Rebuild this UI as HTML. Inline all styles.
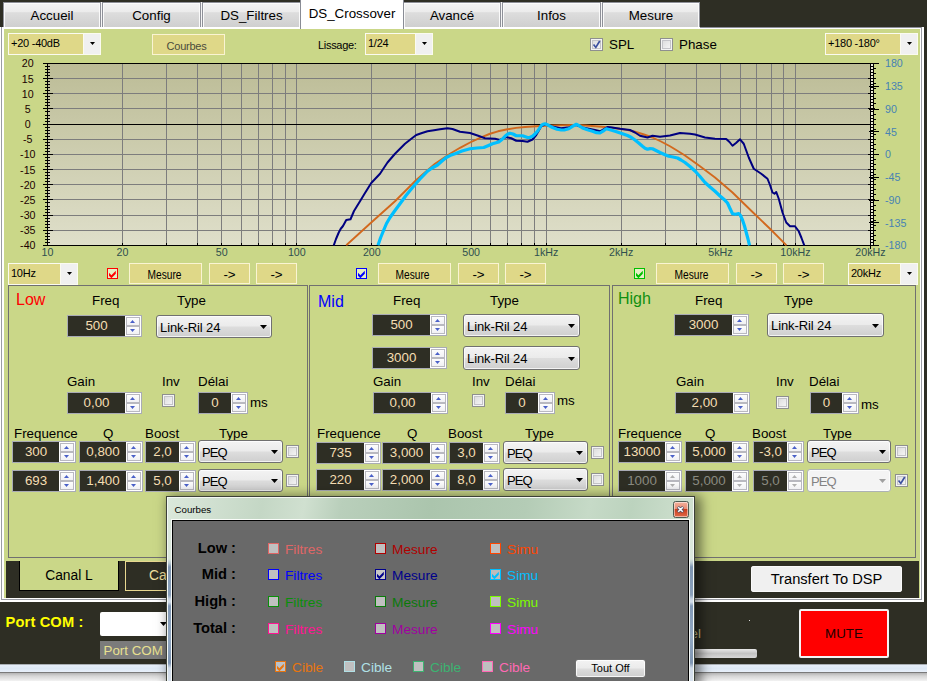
<!DOCTYPE html>
<html lang="fr"><head><meta charset="utf-8"><title>DS Crossover</title>
<style>
html,body{margin:0;padding:0;}
body{width:927px;height:681px;overflow:hidden;background:#2e2e24;position:relative;font-family:"Liberation Sans",sans-serif;}
#root{position:absolute;left:0;top:0;width:927px;height:681px;overflow:hidden;}
#root div,#root svg{position:absolute;}
.t{white-space:nowrap;}
#win{overflow:visible;box-shadow:4px 2px 11px 2px rgba(0,0,0,.5);}
</style></head><body><div id="root">
<div style="left:3px;top:2px;width:697px;height:26px;background:#f6f6f6;"></div>
<div style="left:3px;top:2px;width:98px;height:26px;background:linear-gradient(#f3f3f3 0%,#ebebeb 38%,#dddddd 40%,#cfcfcf 100%);border:1px solid #8e9098;box-sizing:border-box;box-shadow:inset 0 1px 0 #fcfcfc,inset 1px 0 0 #fafafa,inset -1px 0 0 #fafafa;"></div>
<div class="t" style="left:3px;top:9px;font-size:13.33px;line-height:13.33px;color:#000;width:98px;text-align:center;">Accueil</div>
<div style="left:102px;top:2px;width:99px;height:26px;background:linear-gradient(#f3f3f3 0%,#ebebeb 38%,#dddddd 40%,#cfcfcf 100%);border:1px solid #8e9098;box-sizing:border-box;box-shadow:inset 0 1px 0 #fcfcfc,inset 1px 0 0 #fafafa,inset -1px 0 0 #fafafa;"></div>
<div class="t" style="left:102px;top:9px;font-size:13.33px;line-height:13.33px;color:#000;width:99px;text-align:center;">Config</div>
<div style="left:202px;top:2px;width:99px;height:26px;background:linear-gradient(#f3f3f3 0%,#ebebeb 38%,#dddddd 40%,#cfcfcf 100%);border:1px solid #8e9098;box-sizing:border-box;box-shadow:inset 0 1px 0 #fcfcfc,inset 1px 0 0 #fafafa,inset -1px 0 0 #fafafa;"></div>
<div class="t" style="left:202px;top:9px;font-size:13.33px;line-height:13.33px;color:#000;width:99px;text-align:center;">DS_Filtres</div>
<div style="left:403px;top:2px;width:98px;height:26px;background:linear-gradient(#f3f3f3 0%,#ebebeb 38%,#dddddd 40%,#cfcfcf 100%);border:1px solid #8e9098;box-sizing:border-box;box-shadow:inset 0 1px 0 #fcfcfc,inset 1px 0 0 #fafafa,inset -1px 0 0 #fafafa;"></div>
<div class="t" style="left:403px;top:9px;font-size:13.33px;line-height:13.33px;color:#000;width:98px;text-align:center;">Avancé</div>
<div style="left:502px;top:2px;width:99px;height:26px;background:linear-gradient(#f3f3f3 0%,#ebebeb 38%,#dddddd 40%,#cfcfcf 100%);border:1px solid #8e9098;box-sizing:border-box;box-shadow:inset 0 1px 0 #fcfcfc,inset 1px 0 0 #fafafa,inset -1px 0 0 #fafafa;"></div>
<div class="t" style="left:502px;top:9px;font-size:13.33px;line-height:13.33px;color:#000;width:99px;text-align:center;">Infos</div>
<div style="left:602px;top:2px;width:98px;height:26px;background:linear-gradient(#f3f3f3 0%,#ebebeb 38%,#dddddd 40%,#cfcfcf 100%);border:1px solid #8e9098;box-sizing:border-box;box-shadow:inset 0 1px 0 #fcfcfc,inset 1px 0 0 #fafafa,inset -1px 0 0 #fafafa;"></div>
<div class="t" style="left:602px;top:9px;font-size:13.33px;line-height:13.33px;color:#000;width:98px;text-align:center;">Mesure</div>
<div style="left:300px;top:0px;width:104px;height:29px;background:#fff;border:1px solid #898c95;border-bottom:none;border-top:none;box-sizing:border-box;z-index:2;"></div>
<div class="t" style="left:300px;top:7px;font-size:13.33px;line-height:13.33px;color:#000;width:104px;text-align:center;z-index:3;">DS_Crossover</div>
<div style="left:0px;top:27px;width:924px;height:575px;background:#fff;"></div>
<div style="left:700px;top:27px;width:222px;height:1px;background:#8c8e98;"></div>
<div style="left:1px;top:27px;width:1px;height:573px;background:#9a9ca4;"></div>
<div style="left:921px;top:27px;width:1px;height:573px;background:#9a9ca4;"></div>
<div style="left:1px;top:599px;width:921px;height:1px;background:#9a9ca4;"></div>
<div style="left:4px;top:29px;width:916px;height:569px;background:#cad788;"></div>
<div style="left:6px;top:561px;width:913px;height:37px;background:#2e2e24;"></div>
<div style="left:8px;top:33px;width:93px;height:22px;background:#dfd888;border:1px solid #fbfbf0;box-sizing:border-box;"></div>
<div style="left:83px;top:34px;width:17px;height:20px;background:#f0f0f0;border-left:1px solid #fbfbf0;box-sizing:border-box;"></div>
<svg style="left:90px;top:42px" width="6" height="4" viewBox="0 0 6 4"><path d="M0 0H5L2.5 3Z" fill="#000"/></svg>
<div class="t" style="left:11px;top:38px;font-size:11px;line-height:11px;color:#000;letter-spacing:-0.25px;">+20 -40dB</div>
<div style="left:365px;top:33px;width:68px;height:22px;background:#dfd888;border:1px solid #fbfbf0;box-sizing:border-box;"></div>
<div style="left:415px;top:34px;width:17px;height:20px;background:#f0f0f0;border-left:1px solid #fbfbf0;box-sizing:border-box;"></div>
<svg style="left:422px;top:42px" width="6" height="4" viewBox="0 0 6 4"><path d="M0 0H5L2.5 3Z" fill="#000"/></svg>
<div class="t" style="left:368px;top:38px;font-size:11px;line-height:11px;color:#000;letter-spacing:-0.25px;">1/24</div>
<div style="left:825px;top:33px;width:93px;height:22px;background:#dfd888;border:1px solid #fbfbf0;box-sizing:border-box;"></div>
<div style="left:900px;top:34px;width:17px;height:20px;background:#f0f0f0;border-left:1px solid #fbfbf0;box-sizing:border-box;"></div>
<svg style="left:907px;top:42px" width="6" height="4" viewBox="0 0 6 4"><path d="M0 0H5L2.5 3Z" fill="#000"/></svg>
<div class="t" style="left:828px;top:38px;font-size:11px;line-height:11px;color:#000;letter-spacing:-0.25px;">+180 -180°</div>
<div style="left:8px;top:263px;width:70px;height:22px;background:#dfd888;border:1px solid #fbfbf0;box-sizing:border-box;"></div>
<div style="left:60px;top:264px;width:17px;height:20px;background:#f0f0f0;border-left:1px solid #fbfbf0;box-sizing:border-box;"></div>
<svg style="left:67px;top:272px" width="6" height="4" viewBox="0 0 6 4"><path d="M0 0H5L2.5 3Z" fill="#000"/></svg>
<div class="t" style="left:11px;top:268px;font-size:11px;line-height:11px;color:#000;letter-spacing:-0.25px;">10Hz</div>
<div style="left:848px;top:263px;width:70px;height:22px;background:#dfd888;border:1px solid #fbfbf0;box-sizing:border-box;"></div>
<div style="left:900px;top:264px;width:17px;height:20px;background:#f0f0f0;border-left:1px solid #fbfbf0;box-sizing:border-box;"></div>
<svg style="left:907px;top:272px" width="6" height="4" viewBox="0 0 6 4"><path d="M0 0H5L2.5 3Z" fill="#000"/></svg>
<div class="t" style="left:851px;top:268px;font-size:11px;line-height:11px;color:#000;letter-spacing:-0.25px;">20kHz</div>
<div style="left:152px;top:34px;width:73px;height:21px;background:#dfd888;border:1px solid #faf4d2;box-sizing:border-box;"></div>
<div class="t" style="left:150px;top:41px;font-size:11px;line-height:11px;color:#4c4c3c;width:73px;text-align:center;letter-spacing:-0.25px;">Courbes</div>
<div class="t" style="left:318px;top:40px;font-size:11px;line-height:11px;color:#000;letter-spacing:-0.3px;">Lissage:</div>
<div style="left:590px;top:38px;width:13px;height:13px;background:linear-gradient(135deg,#d8d8d8,#fafafa);border:1px solid #8e8f8f;box-sizing:border-box;box-shadow:inset 0 0 0 1px #f4f4f4, inset 0 0 0 2px #c4c4c8;"></div>
<svg style="left:592px;top:40px" width="9" height="9" viewBox="0 0 9 9"><path d="M0.9 4.9L2.2 3.9L3.7 6.1L7 0.6L8.5 1.5L3.9 8.7Z" fill="#3c509f"/></svg>
<div class="t" style="left:609px;top:38px;font-size:13.33px;line-height:13.33px;color:#000;">SPL</div>
<div style="left:660px;top:38px;width:13px;height:13px;background:linear-gradient(135deg,#d8d8d8,#fafafa);border:1px solid #8e8f8f;box-sizing:border-box;box-shadow:inset 0 0 0 1px #f4f4f4, inset 0 0 0 2px #c4c4c8;"></div>
<div class="t" style="left:679px;top:38px;font-size:13.33px;line-height:13.33px;color:#000;">Phase</div>
<svg id="chart" style="left:0;top:55px" width="927" height="207" viewBox="0 55 927 207">
<defs><linearGradient id="pg" x1="0" y1="0" x2="0" y2="1"><stop offset="0" stop-color="#bcbc96"/><stop offset="1" stop-color="#dfdfca"/></linearGradient></defs>
<rect x="47.5" y="63.5" width="822.9" height="182.0" fill="url(#pg)"/>
<rect x="870.9" y="63.5" width="2" height="182.0" fill="#eeeedd"/>
<path d="M122.5 63.5V245.4M166.5 63.5V245.4M197.5 63.5V245.4M221.5 63.5V245.4M241.5 63.5V245.4M258.5 63.5V245.4M272.5 63.5V245.4M285.5 63.5V245.4M296.5 63.5V245.4M371.5 63.5V245.4M415.5 63.5V245.4M446.5 63.5V245.4M471.5 63.5V245.4M490.5 63.5V245.4M507.5 63.5V245.4M521.5 63.5V245.4M534.5 63.5V245.4M546.5 63.5V245.4M621.5 63.5V245.4M665.5 63.5V245.4M696.5 63.5V245.4M720.5 63.5V245.4M740.5 63.5V245.4M756.5 63.5V245.4M771.5 63.5V245.4M783.5 63.5V245.4M795.5 63.5V245.4M47.5 78.5H870.4M47.5 93.5H870.4M47.5 108.5H870.4M47.5 139.5H870.4M47.5 154.5H870.4M47.5 169.5H870.4M47.5 184.5H870.4M47.5 199.5H870.4M47.5 215.5H870.4M47.5 230.5H870.4" stroke="#7d7d7d" stroke-width="1" fill="none" shape-rendering="crispEdges"/>
<path d="M42.5 63.5H878.5M42.5 245.5H878.5M47.5 63.5V245.5M870.5 63.5V248.5M873.5 63.5V245.5M42.5 124.5H870.5M42.5 63.5H52.5M44.5 66.5H49.5M44.5 69.5H49.5M44.5 72.5H49.5M44.5 75.5H49.5M42.5 78.5H52.5M44.5 81.5H49.5M44.5 84.5H49.5M44.5 87.5H49.5M44.5 90.5H49.5M42.5 93.5H52.5M44.5 96.5H49.5M44.5 99.5H49.5M44.5 102.5H49.5M44.5 105.5H49.5M42.5 108.5H52.5M44.5 111.5H49.5M44.5 115.5H49.5M44.5 118.5H49.5M44.5 121.5H49.5M42.5 124.5H52.5M44.5 127.5H49.5M44.5 130.5H49.5M44.5 133.5H49.5M44.5 136.5H49.5M42.5 139.5H52.5M44.5 142.5H49.5M44.5 145.5H49.5M44.5 148.5H49.5M44.5 151.5H49.5M42.5 154.5H52.5M44.5 157.5H49.5M44.5 160.5H49.5M44.5 163.5H49.5M44.5 166.5H49.5M42.5 169.5H52.5M44.5 172.5H49.5M44.5 175.5H49.5M44.5 178.5H49.5M44.5 181.5H49.5M42.5 184.5H52.5M44.5 187.5H49.5M44.5 190.5H49.5M44.5 193.5H49.5M44.5 196.5H49.5M42.5 199.5H52.5M44.5 202.5H49.5M44.5 206.5H49.5M44.5 209.5H49.5M44.5 212.5H49.5M42.5 215.5H52.5M44.5 218.5H49.5M44.5 221.5H49.5M44.5 224.5H49.5M44.5 227.5H49.5M42.5 230.5H52.5M44.5 233.5H49.5M44.5 236.5H49.5M44.5 239.5H49.5M44.5 242.5H49.5M42.5 245.5H52.5M867.5 63.5H874.5M870.5 66.5H873.5M870.5 69.5H873.5M870.5 72.5H873.5M870.5 75.5H873.5M867.5 78.5H874.5M870.5 81.5H873.5M870.5 84.5H873.5M870.5 87.5H873.5M870.5 90.5H873.5M867.5 93.5H874.5M870.5 96.5H873.5M870.5 99.5H873.5M870.5 102.5H873.5M870.5 105.5H873.5M867.5 108.5H874.5M870.5 111.5H873.5M870.5 115.5H873.5M870.5 118.5H873.5M870.5 121.5H873.5M867.5 124.5H874.5M870.5 127.5H873.5M870.5 130.5H873.5M870.5 133.5H873.5M870.5 136.5H873.5M867.5 139.5H874.5M870.5 142.5H873.5M870.5 145.5H873.5M870.5 148.5H873.5M870.5 151.5H873.5M867.5 154.5H874.5M870.5 157.5H873.5M870.5 160.5H873.5M870.5 163.5H873.5M870.5 166.5H873.5M867.5 169.5H874.5M870.5 172.5H873.5M870.5 175.5H873.5M870.5 178.5H873.5M870.5 181.5H873.5M867.5 184.5H874.5M870.5 187.5H873.5M870.5 190.5H873.5M870.5 193.5H873.5M870.5 196.5H873.5M867.5 199.5H874.5M870.5 202.5H873.5M870.5 206.5H873.5M870.5 209.5H873.5M870.5 212.5H873.5M867.5 215.5H874.5M870.5 218.5H873.5M870.5 221.5H873.5M870.5 224.5H873.5M870.5 227.5H873.5M867.5 230.5H874.5M870.5 233.5H873.5M870.5 236.5H873.5M870.5 239.5H873.5M870.5 242.5H873.5M867.5 245.5H874.5M868.5 63.5H878.5M873.5 68.5H875.5M873.5 73.5H875.5M873.5 78.5H875.5M873.5 83.5H875.5M868.5 86.5H878.5M873.5 88.5H875.5M873.5 93.5H875.5M873.5 98.5H875.5M873.5 103.5H875.5M868.5 109.5H878.5M873.5 114.5H875.5M873.5 119.5H875.5M873.5 124.5H875.5M873.5 129.5H875.5M868.5 131.5H878.5M873.5 134.5H875.5M873.5 139.5H875.5M873.5 144.5H875.5M873.5 149.5H875.5M868.5 154.5H878.5M873.5 159.5H875.5M873.5 164.5H875.5M873.5 169.5H875.5M873.5 174.5H875.5M868.5 177.5H878.5M873.5 179.5H875.5M873.5 184.5H875.5M873.5 189.5H875.5M873.5 194.5H875.5M868.5 200.5H878.5M873.5 205.5H875.5M873.5 210.5H875.5M873.5 215.5H875.5M873.5 220.5H875.5M868.5 222.5H878.5M873.5 225.5H875.5M873.5 230.5H875.5M873.5 235.5H875.5M873.5 240.5H875.5M868.5 245.5H878.5M122.5 242.5V245.5M166.5 242.5V245.5M197.5 242.5V245.5M221.5 242.5V245.5M241.5 242.5V245.5M258.5 242.5V245.5M272.5 242.5V245.5M285.5 242.5V245.5M296.5 242.5V245.5M371.5 242.5V245.5M415.5 242.5V245.5M446.5 242.5V245.5M471.5 242.5V245.5M490.5 242.5V245.5M507.5 242.5V245.5M521.5 242.5V245.5M534.5 242.5V245.5M546.5 242.5V245.5M621.5 242.5V245.5M665.5 242.5V245.5M696.5 242.5V245.5M720.5 242.5V245.5M740.5 242.5V245.5M756.5 242.5V245.5M771.5 242.5V245.5M783.5 242.5V245.5M795.5 242.5V245.5M47.5 242.5V245.5" stroke="#000" stroke-width="1" fill="none" shape-rendering="crispEdges"/>
<clipPath id="cp"><rect x="47.5" y="63.5" width="822.9" height="182.5"/></clipPath>
<g clip-path="url(#cp)" fill="none" stroke-linejoin="round">
<polyline points="346.25,245.30 371.25,222.50 395.00,201.25 416.25,180.00 435.00,163.75 450.00,153.75 460.00,147.80 470.00,142.50 480.00,137.80 490.00,133.75 498.00,131.30 507.50,129.25 516.00,127.90 525.00,127.00 540.00,126.00 552.50,125.50 565.00,125.10 576.25,125.00 586.00,125.50 595.00,126.25 608.00,127.30 620.00,128.75 628.00,130.10 635.00,131.75 644.00,134.50 652.50,137.50 661.00,141.50 670.00,146.25 677.00,150.50 685.00,155.50 700.00,166.25 715.00,177.50 732.50,192.50 751.75,211.25 770.00,228.75 786.50,245.30" stroke="#d2691e" stroke-width="1.9"/>
<polyline points="333.75,245.30 336.00,239.00 338.75,232.50 340.75,228.75 343.00,226.00 346.25,220.00 350.50,219.25 354.00,211.00 360.00,201.25 365.00,193.00 371.25,183.00 380.00,173.75 387.50,162.50 395.00,153.75 405.00,143.75 411.00,139.00 416.25,135.00 422.00,133.00 427.50,131.25 434.00,130.20 440.00,129.25 447.50,128.25 452.50,129.00 460.00,131.75 470.00,133.00 477.50,135.50 485.00,138.25 495.00,138.75 500.00,140.00 503.00,138.50 506.25,137.00 511.25,138.25 516.25,140.75 522.50,141.00 527.50,141.75 532.50,139.50 536.25,135.00 541.25,126.25 545.00,124.25 552.00,126.50 561.00,128.30 569.00,127.30 576.25,125.00 582.50,127.50 595.00,130.00 600.00,131.25 604.00,129.00 607.50,127.00 612.00,127.50 620.00,128.75 630.00,130.00 635.00,132.50 640.00,135.75 647.50,137.50 652.50,135.75 660.00,136.75 670.00,135.50 680.00,133.00 690.00,133.75 695.00,134.50 705.00,137.50 715.00,138.75 726.25,139.00 729.50,142.00 732.50,145.75 736.00,143.00 740.00,139.30 743.75,143.75 748.75,157.50 753.75,168.75 761.25,173.75 767.50,178.75 770.00,185.00 772.50,192.50 774.50,193.75 776.25,192.00 778.75,198.75 782.50,212.50 786.25,222.50 790.00,226.25 795.00,226.25 798.75,231.25 801.50,238.00 804.25,245.30" stroke="#000080" stroke-width="2"/>
<polyline points="378.00,245.30 380.50,238.00 383.75,230.00 386.50,223.50 390.00,217.50 395.00,210.50 400.00,203.75 406.00,195.50 412.50,187.50 420.00,179.00 427.50,171.25 432.00,168.00 437.50,165.00 442.00,161.00 446.25,157.50 450.50,155.30 455.00,153.75 462.00,151.00 470.00,148.75 477.00,148.00 483.75,147.50 488.00,145.70 492.50,143.75 498.75,142.00 502.00,139.50 505.00,136.25 507.50,134.30 510.00,133.25 513.00,134.00 516.25,135.75 522.50,135.75 527.50,137.50 530.00,137.30 532.50,136.25 535.00,134.00 537.50,131.25 541.25,125.50 543.00,124.20 545.00,123.75 548.50,125.30 552.50,127.50 557.00,129.20 561.25,130.00 565.00,129.80 568.75,128.75 572.50,126.30 576.25,124.25 579.00,125.70 582.50,128.00 587.50,129.80 592.50,131.25 596.50,132.70 600.00,133.00 603.00,131.20 606.25,128.75 610.00,129.70 615.00,131.25 621.00,133.20 627.50,135.50 631.50,137.50 635.00,140.00 639.00,143.20 642.50,146.25 645.00,148.20 647.50,149.25 650.00,148.60 652.50,148.75 656.00,150.50 660.00,152.50 664.50,154.50 668.75,156.25 673.00,157.00 677.50,158.00 681.00,160.00 685.00,162.50 690.00,166.50 695.00,171.00 700.00,176.50 705.00,182.50 710.00,187.00 715.00,191.25 720.00,196.00 725.00,200.30 727.50,203.00 730.00,208.50 732.50,213.75 735.50,214.30 738.75,213.50 740.50,215.50 742.50,220.00 744.50,226.00 746.25,232.50 748.00,239.00 749.50,245.30" stroke="#00bfff" stroke-width="3.2"/>
</g>
<g font-family="Liberation Sans, sans-serif" font-size="10.67">
<text x="27.8" y="67.4" text-anchor="middle" fill="#1a0000">20</text>
<text x="27.8" y="82.5" text-anchor="middle" fill="#1a0000">15</text>
<text x="27.8" y="97.7" text-anchor="middle" fill="#1a0000">10</text>
<text x="27.8" y="112.9" text-anchor="middle" fill="#1a0000">5</text>
<text x="27.8" y="128.0" text-anchor="middle" fill="#1a0000">0</text>
<text x="27.8" y="143.2" text-anchor="middle" fill="#1a0000">-5</text>
<text x="27.8" y="158.3" text-anchor="middle" fill="#1a0000">-10</text>
<text x="27.8" y="173.5" text-anchor="middle" fill="#1a0000">-15</text>
<text x="27.8" y="188.7" text-anchor="middle" fill="#1a0000">-20</text>
<text x="27.8" y="203.8" text-anchor="middle" fill="#1a0000">-25</text>
<text x="27.8" y="219.0" text-anchor="middle" fill="#1a0000">-30</text>
<text x="27.8" y="234.2" text-anchor="middle" fill="#1a0000">-35</text>
<text x="27.8" y="249.3" text-anchor="middle" fill="#1a0000">-40</text>
<text x="885.0" y="67.4" text-anchor="start" fill="#4682b4">180</text>
<text x="885.0" y="90.2" text-anchor="start" fill="#4682b4">135</text>
<text x="885.0" y="112.9" text-anchor="start" fill="#4682b4">90</text>
<text x="885.0" y="135.7" text-anchor="start" fill="#4682b4">45</text>
<text x="885.0" y="158.4" text-anchor="start" fill="#4682b4">0</text>
<text x="885.0" y="181.2" text-anchor="start" fill="#4682b4">-45</text>
<text x="885.0" y="203.9" text-anchor="start" fill="#4682b4">-90</text>
<text x="885.0" y="226.7" text-anchor="start" fill="#4682b4">-135</text>
<text x="885.0" y="249.4" text-anchor="start" fill="#4682b4">-180</text>
<text x="47.5" y="256.0" text-anchor="middle" fill="#2f4f4f">10</text>
<text x="122.5" y="256.0" text-anchor="middle" fill="#2f4f4f">20</text>
<text x="221.8" y="256.0" text-anchor="middle" fill="#2f4f4f">50</text>
<text x="296.8" y="256.0" text-anchor="middle" fill="#2f4f4f">100</text>
<text x="371.8" y="256.0" text-anchor="middle" fill="#2f4f4f">200</text>
<text x="471.1" y="256.0" text-anchor="middle" fill="#2f4f4f">500</text>
<text x="546.1" y="256.0" text-anchor="middle" fill="#2f4f4f">1kHz</text>
<text x="621.1" y="256.0" text-anchor="middle" fill="#2f4f4f">2kHz</text>
<text x="720.4" y="256.0" text-anchor="middle" fill="#2f4f4f">5kHz</text>
<text x="795.4" y="256.0" text-anchor="middle" fill="#2f4f4f">10kHz</text>
<text x="870.4" y="256.0" text-anchor="middle" fill="#2f4f4f">20kHz</text>
</g></svg>
<div style="left:107px;top:268px;width:11px;height:11px;background:#e6efc6;border:1px solid #ff0000;box-sizing:border-box;"></div>
<svg style="left:107px;top:268px" width="11" height="11" viewBox="0 0 11 11"><path d="M2 4.8L4.4 7.2L8.8 2.8V5.8L4.4 10.2L2 7.8Z" fill="#ff0000"/></svg>
<div style="left:129px;top:263px;width:73px;height:21px;background:#dfd888;border:1px solid #faf4d2;box-sizing:border-box;"></div>
<div class="t" style="left:128px;top:269px;font-size:12px;line-height:12px;color:#000;width:73px;text-align:center;transform:scaleX(0.85);">Mesure</div>
<div style="left:209px;top:263px;width:41px;height:21px;background:#dfd888;border:1px solid #faf4d2;box-sizing:border-box;"></div>
<div class="t" style="left:209px;top:268px;font-size:13.33px;line-height:13.33px;color:#000;width:41px;text-align:center;">-&gt;</div>
<div style="left:256px;top:263px;width:41px;height:21px;background:#dfd888;border:1px solid #faf4d2;box-sizing:border-box;"></div>
<div class="t" style="left:256px;top:268px;font-size:13.33px;line-height:13.33px;color:#000;width:41px;text-align:center;">-&gt;</div>
<div style="left:356px;top:268px;width:11px;height:11px;background:#e6efc6;border:1px solid #0000ff;box-sizing:border-box;"></div>
<svg style="left:356px;top:268px" width="11" height="11" viewBox="0 0 11 11"><path d="M2 4.8L4.4 7.2L8.8 2.8V5.8L4.4 10.2L2 7.8Z" fill="#0000ff"/></svg>
<div style="left:378px;top:263px;width:73px;height:21px;background:#dfd888;border:1px solid #faf4d2;box-sizing:border-box;"></div>
<div class="t" style="left:376px;top:269px;font-size:12px;line-height:12px;color:#000;width:73px;text-align:center;transform:scaleX(0.85);">Mesure</div>
<div style="left:458px;top:263px;width:41px;height:21px;background:#dfd888;border:1px solid #faf4d2;box-sizing:border-box;"></div>
<div class="t" style="left:458px;top:268px;font-size:13.33px;line-height:13.33px;color:#000;width:41px;text-align:center;">-&gt;</div>
<div style="left:505px;top:263px;width:41px;height:21px;background:#dfd888;border:1px solid #faf4d2;box-sizing:border-box;"></div>
<div class="t" style="left:505px;top:268px;font-size:13.33px;line-height:13.33px;color:#000;width:41px;text-align:center;">-&gt;</div>
<div style="left:634px;top:268px;width:11px;height:11px;background:#e6efc6;border:1px solid #00c000;box-sizing:border-box;"></div>
<svg style="left:634px;top:268px" width="11" height="11" viewBox="0 0 11 11"><path d="M2 4.8L4.4 7.2L8.8 2.8V5.8L4.4 10.2L2 7.8Z" fill="#00c000"/></svg>
<div style="left:656px;top:263px;width:73px;height:21px;background:#dfd888;border:1px solid #faf4d2;box-sizing:border-box;"></div>
<div class="t" style="left:655px;top:269px;font-size:12px;line-height:12px;color:#000;width:73px;text-align:center;transform:scaleX(0.85);">Mesure</div>
<div style="left:736px;top:263px;width:41px;height:21px;background:#dfd888;border:1px solid #faf4d2;box-sizing:border-box;"></div>
<div class="t" style="left:736px;top:268px;font-size:13.33px;line-height:13.33px;color:#000;width:41px;text-align:center;">-&gt;</div>
<div style="left:783px;top:263px;width:41px;height:21px;background:#dfd888;border:1px solid #faf4d2;box-sizing:border-box;"></div>
<div class="t" style="left:783px;top:268px;font-size:13.33px;line-height:13.33px;color:#000;width:41px;text-align:center;">-&gt;</div>
<div style="left:8px;top:285px;width:300px;height:273px;border:1px solid #707070;box-sizing:border-box;"></div>
<div style="left:309px;top:285px;width:301px;height:273px;border:1px solid #707070;box-sizing:border-box;"></div>
<div style="left:612px;top:285px;width:304px;height:273px;border:1px solid #707070;box-sizing:border-box;"></div>
<div class="t" style="left:16px;top:292px;font-size:16px;line-height:16px;color:#ff0000;">Low</div>
<div class="t" style="left:92px;top:294px;font-size:13.33px;line-height:13.33px;color:#000;">Freq</div>
<div class="t" style="left:177px;top:294px;font-size:13.33px;line-height:13.33px;color:#000;">Type</div>
<div style="left:67px;top:315px;width:75px;height:22px;background:#2e2e24;border:1px solid #a9abb5;box-sizing:border-box;"></div>
<div style="left:125px;top:316px;width:16px;height:20px;background:#fff;"></div>
<div style="left:126px;top:317.0px;width:14px;height:9.0px;border:1px solid #b9b9c0;box-sizing:border-box;background:linear-gradient(#fdfdfd,#f1f1f4);"></div>
<svg style="left:130px;top:320px" width="5" height="3" viewBox="0 0 5 3"><path d="M0 3L2.5 0L5 3Z" fill="#4a60c8"/></svg>
<div style="left:126px;top:326.0px;width:14px;height:9.0px;border:1px solid #b9b9c0;box-sizing:border-box;background:linear-gradient(#fdfdfd,#f1f1f4);"></div>
<svg style="left:130px;top:329px" width="5" height="3" viewBox="0 0 5 3"><path d="M0 0H5L2.5 3Z" fill="#4a60c8"/></svg>
<div class="t" style="left:68px;top:319px;font-size:13.33px;line-height:13.33px;color:#f5deb3;width:57px;text-align:center;">500</div>
<div style="left:156px;top:315px;width:116px;height:23px;background:linear-gradient(#f3f3f3 0%,#ebebeb 48%,#dddddd 52%,#cfcfcf 100%);border:1px solid #707070;border-radius:3px;box-sizing:border-box;box-shadow:inset 0 0 0 1px rgba(255,255,255,.75);"></div>
<svg style="left:260.0px;top:325.0px" width="7" height="4" viewBox="0 0 7 4"><path d="M0 0H7L3.5 4Z" fill="#000"/></svg>
<div class="t" style="left:160px;top:321px;font-size:13px;line-height:13px;color:#000;letter-spacing:-0.1px;">Link-Ril 24</div>
<div class="t" style="left:67px;top:375px;font-size:13.33px;line-height:13.33px;color:#000;">Gain</div>
<div class="t" style="left:162px;top:375px;font-size:13.33px;line-height:13.33px;color:#000;">Inv</div>
<div class="t" style="left:198px;top:375px;font-size:13.33px;line-height:13.33px;color:#000;">Délai</div>
<div style="left:67px;top:392px;width:75px;height:22px;background:#2e2e24;border:1px solid #a9abb5;box-sizing:border-box;"></div>
<div style="left:125px;top:393px;width:16px;height:20px;background:#fff;"></div>
<div style="left:126px;top:394.0px;width:14px;height:9.0px;border:1px solid #b9b9c0;box-sizing:border-box;background:linear-gradient(#fdfdfd,#f1f1f4);"></div>
<svg style="left:130px;top:397px" width="5" height="3" viewBox="0 0 5 3"><path d="M0 3L2.5 0L5 3Z" fill="#4a60c8"/></svg>
<div style="left:126px;top:403.0px;width:14px;height:9.0px;border:1px solid #b9b9c0;box-sizing:border-box;background:linear-gradient(#fdfdfd,#f1f1f4);"></div>
<svg style="left:130px;top:406px" width="5" height="3" viewBox="0 0 5 3"><path d="M0 0H5L2.5 3Z" fill="#4a60c8"/></svg>
<div class="t" style="left:68px;top:396px;font-size:13.33px;line-height:13.33px;color:#f5deb3;width:57px;text-align:center;">0,00</div>
<div style="left:162px;top:394px;width:13px;height:13px;background:linear-gradient(135deg,#d8d8d8,#fafafa);border:1px solid #8e8f8f;box-sizing:border-box;box-shadow:inset 0 0 0 1px #f4f4f4, inset 0 0 0 2px #c4c4c8;"></div>
<div style="left:198px;top:392px;width:50px;height:22px;background:#2e2e24;border:1px solid #a9abb5;box-sizing:border-box;"></div>
<div style="left:231px;top:393px;width:16px;height:20px;background:#fff;"></div>
<div style="left:232px;top:394.0px;width:14px;height:9.0px;border:1px solid #b9b9c0;box-sizing:border-box;background:linear-gradient(#fdfdfd,#f1f1f4);"></div>
<svg style="left:236px;top:397px" width="5" height="3" viewBox="0 0 5 3"><path d="M0 3L2.5 0L5 3Z" fill="#4a60c8"/></svg>
<div style="left:232px;top:403.0px;width:14px;height:9.0px;border:1px solid #b9b9c0;box-sizing:border-box;background:linear-gradient(#fdfdfd,#f1f1f4);"></div>
<svg style="left:236px;top:406px" width="5" height="3" viewBox="0 0 5 3"><path d="M0 0H5L2.5 3Z" fill="#4a60c8"/></svg>
<div class="t" style="left:199px;top:396px;font-size:13.33px;line-height:13.33px;color:#f5deb3;width:32px;text-align:center;">0</div>
<div class="t" style="left:250px;top:396px;font-size:13.33px;line-height:13.33px;color:#000;">ms</div>
<div class="t" style="left:14px;top:427px;font-size:13.33px;line-height:13.33px;color:#000;">Frequence</div>
<div class="t" style="left:103px;top:427px;font-size:13.33px;line-height:13.33px;color:#000;">Q</div>
<div class="t" style="left:145px;top:427px;font-size:13.33px;line-height:13.33px;color:#000;">Boost</div>
<div class="t" style="left:219px;top:427px;font-size:13.33px;line-height:13.33px;color:#000;">Type</div>
<div style="left:12px;top:441px;width:64px;height:22px;background:#2e2e24;border:1px solid #a9abb5;box-sizing:border-box;"></div>
<div style="left:59px;top:442px;width:16px;height:20px;background:#fff;"></div>
<div style="left:60px;top:443.0px;width:14px;height:9.0px;border:1px solid #b9b9c0;box-sizing:border-box;background:linear-gradient(#fdfdfd,#f1f1f4);"></div>
<svg style="left:64px;top:446px" width="5" height="3" viewBox="0 0 5 3"><path d="M0 3L2.5 0L5 3Z" fill="#4a60c8"/></svg>
<div style="left:60px;top:452.0px;width:14px;height:9.0px;border:1px solid #b9b9c0;box-sizing:border-box;background:linear-gradient(#fdfdfd,#f1f1f4);"></div>
<svg style="left:64px;top:455px" width="5" height="3" viewBox="0 0 5 3"><path d="M0 0H5L2.5 3Z" fill="#4a60c8"/></svg>
<div class="t" style="left:13px;top:445px;font-size:13.33px;line-height:13.33px;color:#f5deb3;width:46px;text-align:center;">300</div>
<div style="left:79px;top:441px;width:64px;height:22px;background:#2e2e24;border:1px solid #a9abb5;box-sizing:border-box;"></div>
<div style="left:126px;top:442px;width:16px;height:20px;background:#fff;"></div>
<div style="left:127px;top:443.0px;width:14px;height:9.0px;border:1px solid #b9b9c0;box-sizing:border-box;background:linear-gradient(#fdfdfd,#f1f1f4);"></div>
<svg style="left:131px;top:446px" width="5" height="3" viewBox="0 0 5 3"><path d="M0 3L2.5 0L5 3Z" fill="#4a60c8"/></svg>
<div style="left:127px;top:452.0px;width:14px;height:9.0px;border:1px solid #b9b9c0;box-sizing:border-box;background:linear-gradient(#fdfdfd,#f1f1f4);"></div>
<svg style="left:131px;top:455px" width="5" height="3" viewBox="0 0 5 3"><path d="M0 0H5L2.5 3Z" fill="#4a60c8"/></svg>
<div class="t" style="left:80px;top:445px;font-size:13.33px;line-height:13.33px;color:#f5deb3;width:46px;text-align:center;">0,800</div>
<div style="left:145px;top:441px;width:51px;height:22px;background:#2e2e24;border:1px solid #a9abb5;box-sizing:border-box;"></div>
<div style="left:179px;top:442px;width:16px;height:20px;background:#fff;"></div>
<div style="left:180px;top:443.0px;width:14px;height:9.0px;border:1px solid #b9b9c0;box-sizing:border-box;background:linear-gradient(#fdfdfd,#f1f1f4);"></div>
<svg style="left:184px;top:446px" width="5" height="3" viewBox="0 0 5 3"><path d="M0 3L2.5 0L5 3Z" fill="#4a60c8"/></svg>
<div style="left:180px;top:452.0px;width:14px;height:9.0px;border:1px solid #b9b9c0;box-sizing:border-box;background:linear-gradient(#fdfdfd,#f1f1f4);"></div>
<svg style="left:184px;top:455px" width="5" height="3" viewBox="0 0 5 3"><path d="M0 0H5L2.5 3Z" fill="#4a60c8"/></svg>
<div class="t" style="left:146px;top:445px;font-size:13.33px;line-height:13.33px;color:#f5deb3;width:33px;text-align:center;">2,0</div>
<div style="left:198px;top:440px;width:85px;height:23px;background:linear-gradient(#f3f3f3 0%,#ebebeb 48%,#dddddd 52%,#cfcfcf 100%);border:1px solid #707070;border-radius:3px;box-sizing:border-box;box-shadow:inset 0 0 0 1px rgba(255,255,255,.75);"></div>
<svg style="left:271.0px;top:450.0px" width="7" height="4" viewBox="0 0 7 4"><path d="M0 0H7L3.5 4Z" fill="#000"/></svg>
<div class="t" style="left:202px;top:446px;font-size:13px;line-height:13px;color:#000;letter-spacing:-0.9px;">PEQ</div>
<div style="left:286px;top:445px;width:13px;height:13px;background:linear-gradient(135deg,#d8d8d8,#fafafa);border:1px solid #8e8f8f;box-sizing:border-box;box-shadow:inset 0 0 0 1px #f4f4f4, inset 0 0 0 2px #c4c4c8;"></div>
<div style="left:12px;top:470px;width:64px;height:22px;background:#2e2e24;border:1px solid #a9abb5;box-sizing:border-box;"></div>
<div style="left:59px;top:471px;width:16px;height:20px;background:#fff;"></div>
<div style="left:60px;top:472.0px;width:14px;height:9.0px;border:1px solid #b9b9c0;box-sizing:border-box;background:linear-gradient(#fdfdfd,#f1f1f4);"></div>
<svg style="left:64px;top:475px" width="5" height="3" viewBox="0 0 5 3"><path d="M0 3L2.5 0L5 3Z" fill="#4a60c8"/></svg>
<div style="left:60px;top:481.0px;width:14px;height:9.0px;border:1px solid #b9b9c0;box-sizing:border-box;background:linear-gradient(#fdfdfd,#f1f1f4);"></div>
<svg style="left:64px;top:484px" width="5" height="3" viewBox="0 0 5 3"><path d="M0 0H5L2.5 3Z" fill="#4a60c8"/></svg>
<div class="t" style="left:13px;top:474px;font-size:13.33px;line-height:13.33px;color:#f5deb3;width:46px;text-align:center;">693</div>
<div style="left:79px;top:470px;width:64px;height:22px;background:#2e2e24;border:1px solid #a9abb5;box-sizing:border-box;"></div>
<div style="left:126px;top:471px;width:16px;height:20px;background:#fff;"></div>
<div style="left:127px;top:472.0px;width:14px;height:9.0px;border:1px solid #b9b9c0;box-sizing:border-box;background:linear-gradient(#fdfdfd,#f1f1f4);"></div>
<svg style="left:131px;top:475px" width="5" height="3" viewBox="0 0 5 3"><path d="M0 3L2.5 0L5 3Z" fill="#4a60c8"/></svg>
<div style="left:127px;top:481.0px;width:14px;height:9.0px;border:1px solid #b9b9c0;box-sizing:border-box;background:linear-gradient(#fdfdfd,#f1f1f4);"></div>
<svg style="left:131px;top:484px" width="5" height="3" viewBox="0 0 5 3"><path d="M0 0H5L2.5 3Z" fill="#4a60c8"/></svg>
<div class="t" style="left:80px;top:474px;font-size:13.33px;line-height:13.33px;color:#f5deb3;width:46px;text-align:center;">1,400</div>
<div style="left:145px;top:470px;width:51px;height:22px;background:#2e2e24;border:1px solid #a9abb5;box-sizing:border-box;"></div>
<div style="left:179px;top:471px;width:16px;height:20px;background:#fff;"></div>
<div style="left:180px;top:472.0px;width:14px;height:9.0px;border:1px solid #b9b9c0;box-sizing:border-box;background:linear-gradient(#fdfdfd,#f1f1f4);"></div>
<svg style="left:184px;top:475px" width="5" height="3" viewBox="0 0 5 3"><path d="M0 3L2.5 0L5 3Z" fill="#4a60c8"/></svg>
<div style="left:180px;top:481.0px;width:14px;height:9.0px;border:1px solid #b9b9c0;box-sizing:border-box;background:linear-gradient(#fdfdfd,#f1f1f4);"></div>
<svg style="left:184px;top:484px" width="5" height="3" viewBox="0 0 5 3"><path d="M0 0H5L2.5 3Z" fill="#4a60c8"/></svg>
<div class="t" style="left:146px;top:474px;font-size:13.33px;line-height:13.33px;color:#f5deb3;width:33px;text-align:center;">5,0</div>
<div style="left:198px;top:469px;width:85px;height:23px;background:linear-gradient(#f3f3f3 0%,#ebebeb 48%,#dddddd 52%,#cfcfcf 100%);border:1px solid #707070;border-radius:3px;box-sizing:border-box;box-shadow:inset 0 0 0 1px rgba(255,255,255,.75);"></div>
<svg style="left:271.0px;top:479.0px" width="7" height="4" viewBox="0 0 7 4"><path d="M0 0H7L3.5 4Z" fill="#000"/></svg>
<div class="t" style="left:202px;top:475px;font-size:13px;line-height:13px;color:#000;letter-spacing:-0.9px;">PEQ</div>
<div style="left:286px;top:474px;width:13px;height:13px;background:linear-gradient(135deg,#d8d8d8,#fafafa);border:1px solid #8e8f8f;box-sizing:border-box;box-shadow:inset 0 0 0 1px #f4f4f4, inset 0 0 0 2px #c4c4c8;"></div>
<div class="t" style="left:318px;top:294px;font-size:16px;line-height:16px;color:#0000ff;">Mid</div>
<div class="t" style="left:393px;top:294px;font-size:13.33px;line-height:13.33px;color:#000;">Freq</div>
<div class="t" style="left:490px;top:294px;font-size:13.33px;line-height:13.33px;color:#000;">Type</div>
<div style="left:372px;top:314px;width:75px;height:22px;background:#2e2e24;border:1px solid #a9abb5;box-sizing:border-box;"></div>
<div style="left:430px;top:315px;width:16px;height:20px;background:#fff;"></div>
<div style="left:431px;top:316.0px;width:14px;height:9.0px;border:1px solid #b9b9c0;box-sizing:border-box;background:linear-gradient(#fdfdfd,#f1f1f4);"></div>
<svg style="left:435px;top:319px" width="5" height="3" viewBox="0 0 5 3"><path d="M0 3L2.5 0L5 3Z" fill="#4a60c8"/></svg>
<div style="left:431px;top:325.0px;width:14px;height:9.0px;border:1px solid #b9b9c0;box-sizing:border-box;background:linear-gradient(#fdfdfd,#f1f1f4);"></div>
<svg style="left:435px;top:328px" width="5" height="3" viewBox="0 0 5 3"><path d="M0 0H5L2.5 3Z" fill="#4a60c8"/></svg>
<div class="t" style="left:373px;top:318px;font-size:13.33px;line-height:13.33px;color:#f5deb3;width:57px;text-align:center;">500</div>
<div style="left:463px;top:314px;width:117px;height:23px;background:linear-gradient(#f3f3f3 0%,#ebebeb 48%,#dddddd 52%,#cfcfcf 100%);border:1px solid #707070;border-radius:3px;box-sizing:border-box;box-shadow:inset 0 0 0 1px rgba(255,255,255,.75);"></div>
<svg style="left:568.0px;top:324.0px" width="7" height="4" viewBox="0 0 7 4"><path d="M0 0H7L3.5 4Z" fill="#000"/></svg>
<div class="t" style="left:467px;top:320px;font-size:13px;line-height:13px;color:#000;letter-spacing:-0.1px;">Link-Ril 24</div>
<div style="left:372px;top:347px;width:75px;height:22px;background:#2e2e24;border:1px solid #a9abb5;box-sizing:border-box;"></div>
<div style="left:430px;top:348px;width:16px;height:20px;background:#fff;"></div>
<div style="left:431px;top:349.0px;width:14px;height:9.0px;border:1px solid #b9b9c0;box-sizing:border-box;background:linear-gradient(#fdfdfd,#f1f1f4);"></div>
<svg style="left:435px;top:352px" width="5" height="3" viewBox="0 0 5 3"><path d="M0 3L2.5 0L5 3Z" fill="#4a60c8"/></svg>
<div style="left:431px;top:358.0px;width:14px;height:9.0px;border:1px solid #b9b9c0;box-sizing:border-box;background:linear-gradient(#fdfdfd,#f1f1f4);"></div>
<svg style="left:435px;top:361px" width="5" height="3" viewBox="0 0 5 3"><path d="M0 0H5L2.5 3Z" fill="#4a60c8"/></svg>
<div class="t" style="left:373px;top:351px;font-size:13.33px;line-height:13.33px;color:#f5deb3;width:57px;text-align:center;">3000</div>
<div style="left:463px;top:346px;width:117px;height:24px;background:linear-gradient(#f3f3f3 0%,#ebebeb 48%,#dddddd 52%,#cfcfcf 100%);border:1px solid #707070;border-radius:3px;box-sizing:border-box;box-shadow:inset 0 0 0 1px rgba(255,255,255,.75);"></div>
<svg style="left:568.0px;top:356.5px" width="7" height="4" viewBox="0 0 7 4"><path d="M0 0H7L3.5 4Z" fill="#000"/></svg>
<div class="t" style="left:467px;top:352px;font-size:13px;line-height:13px;color:#000;letter-spacing:-0.1px;">Link-Ril 24</div>
<div class="t" style="left:373px;top:375px;font-size:13.33px;line-height:13.33px;color:#000;">Gain</div>
<div class="t" style="left:472px;top:375px;font-size:13.33px;line-height:13.33px;color:#000;">Inv</div>
<div class="t" style="left:505px;top:375px;font-size:13.33px;line-height:13.33px;color:#000;">Délai</div>
<div style="left:373px;top:392px;width:75px;height:22px;background:#2e2e24;border:1px solid #a9abb5;box-sizing:border-box;"></div>
<div style="left:431px;top:393px;width:16px;height:20px;background:#fff;"></div>
<div style="left:432px;top:394.0px;width:14px;height:9.0px;border:1px solid #b9b9c0;box-sizing:border-box;background:linear-gradient(#fdfdfd,#f1f1f4);"></div>
<svg style="left:436px;top:397px" width="5" height="3" viewBox="0 0 5 3"><path d="M0 3L2.5 0L5 3Z" fill="#4a60c8"/></svg>
<div style="left:432px;top:403.0px;width:14px;height:9.0px;border:1px solid #b9b9c0;box-sizing:border-box;background:linear-gradient(#fdfdfd,#f1f1f4);"></div>
<svg style="left:436px;top:406px" width="5" height="3" viewBox="0 0 5 3"><path d="M0 0H5L2.5 3Z" fill="#4a60c8"/></svg>
<div class="t" style="left:374px;top:396px;font-size:13.33px;line-height:13.33px;color:#f5deb3;width:57px;text-align:center;">0,00</div>
<div style="left:472px;top:394px;width:13px;height:13px;background:linear-gradient(135deg,#d8d8d8,#fafafa);border:1px solid #8e8f8f;box-sizing:border-box;box-shadow:inset 0 0 0 1px #f4f4f4, inset 0 0 0 2px #c4c4c8;"></div>
<div style="left:505px;top:392px;width:50px;height:22px;background:#2e2e24;border:1px solid #a9abb5;box-sizing:border-box;"></div>
<div style="left:538px;top:393px;width:16px;height:20px;background:#fff;"></div>
<div style="left:539px;top:394.0px;width:14px;height:9.0px;border:1px solid #b9b9c0;box-sizing:border-box;background:linear-gradient(#fdfdfd,#f1f1f4);"></div>
<svg style="left:543px;top:397px" width="5" height="3" viewBox="0 0 5 3"><path d="M0 3L2.5 0L5 3Z" fill="#4a60c8"/></svg>
<div style="left:539px;top:403.0px;width:14px;height:9.0px;border:1px solid #b9b9c0;box-sizing:border-box;background:linear-gradient(#fdfdfd,#f1f1f4);"></div>
<svg style="left:543px;top:406px" width="5" height="3" viewBox="0 0 5 3"><path d="M0 0H5L2.5 3Z" fill="#4a60c8"/></svg>
<div class="t" style="left:506px;top:396px;font-size:13.33px;line-height:13.33px;color:#f5deb3;width:32px;text-align:center;">0</div>
<div class="t" style="left:557px;top:394px;font-size:13.33px;line-height:13.33px;color:#000;">ms</div>
<div class="t" style="left:317px;top:427px;font-size:13.33px;line-height:13.33px;color:#000;">Frequence</div>
<div class="t" style="left:407px;top:427px;font-size:13.33px;line-height:13.33px;color:#000;">Q</div>
<div class="t" style="left:448px;top:427px;font-size:13.33px;line-height:13.33px;color:#000;">Boost</div>
<div class="t" style="left:525px;top:427px;font-size:13.33px;line-height:13.33px;color:#000;">Type</div>
<div style="left:316px;top:442px;width:65px;height:22px;background:#2e2e24;border:1px solid #a9abb5;box-sizing:border-box;"></div>
<div style="left:364px;top:443px;width:16px;height:20px;background:#fff;"></div>
<div style="left:365px;top:444.0px;width:14px;height:9.0px;border:1px solid #b9b9c0;box-sizing:border-box;background:linear-gradient(#fdfdfd,#f1f1f4);"></div>
<svg style="left:369px;top:447px" width="5" height="3" viewBox="0 0 5 3"><path d="M0 3L2.5 0L5 3Z" fill="#4a60c8"/></svg>
<div style="left:365px;top:453.0px;width:14px;height:9.0px;border:1px solid #b9b9c0;box-sizing:border-box;background:linear-gradient(#fdfdfd,#f1f1f4);"></div>
<svg style="left:369px;top:456px" width="5" height="3" viewBox="0 0 5 3"><path d="M0 0H5L2.5 3Z" fill="#4a60c8"/></svg>
<div class="t" style="left:317px;top:446px;font-size:13.33px;line-height:13.33px;color:#f5deb3;width:47px;text-align:center;">735</div>
<div style="left:382px;top:442px;width:65px;height:22px;background:#2e2e24;border:1px solid #a9abb5;box-sizing:border-box;"></div>
<div style="left:430px;top:443px;width:16px;height:20px;background:#fff;"></div>
<div style="left:431px;top:444.0px;width:14px;height:9.0px;border:1px solid #b9b9c0;box-sizing:border-box;background:linear-gradient(#fdfdfd,#f1f1f4);"></div>
<svg style="left:435px;top:447px" width="5" height="3" viewBox="0 0 5 3"><path d="M0 3L2.5 0L5 3Z" fill="#4a60c8"/></svg>
<div style="left:431px;top:453.0px;width:14px;height:9.0px;border:1px solid #b9b9c0;box-sizing:border-box;background:linear-gradient(#fdfdfd,#f1f1f4);"></div>
<svg style="left:435px;top:456px" width="5" height="3" viewBox="0 0 5 3"><path d="M0 0H5L2.5 3Z" fill="#4a60c8"/></svg>
<div class="t" style="left:383px;top:446px;font-size:13.33px;line-height:13.33px;color:#f5deb3;width:47px;text-align:center;">3,000</div>
<div style="left:449px;top:442px;width:51px;height:22px;background:#2e2e24;border:1px solid #a9abb5;box-sizing:border-box;"></div>
<div style="left:483px;top:443px;width:16px;height:20px;background:#fff;"></div>
<div style="left:484px;top:444.0px;width:14px;height:9.0px;border:1px solid #b9b9c0;box-sizing:border-box;background:linear-gradient(#fdfdfd,#f1f1f4);"></div>
<svg style="left:488px;top:447px" width="5" height="3" viewBox="0 0 5 3"><path d="M0 3L2.5 0L5 3Z" fill="#4a60c8"/></svg>
<div style="left:484px;top:453.0px;width:14px;height:9.0px;border:1px solid #b9b9c0;box-sizing:border-box;background:linear-gradient(#fdfdfd,#f1f1f4);"></div>
<svg style="left:488px;top:456px" width="5" height="3" viewBox="0 0 5 3"><path d="M0 0H5L2.5 3Z" fill="#4a60c8"/></svg>
<div class="t" style="left:450px;top:446px;font-size:13.33px;line-height:13.33px;color:#f5deb3;width:33px;text-align:center;">3,0</div>
<div style="left:503px;top:441px;width:85px;height:23px;background:linear-gradient(#f3f3f3 0%,#ebebeb 48%,#dddddd 52%,#cfcfcf 100%);border:1px solid #707070;border-radius:3px;box-sizing:border-box;box-shadow:inset 0 0 0 1px rgba(255,255,255,.75);"></div>
<svg style="left:576.0px;top:451.0px" width="7" height="4" viewBox="0 0 7 4"><path d="M0 0H7L3.5 4Z" fill="#000"/></svg>
<div class="t" style="left:507px;top:447px;font-size:13px;line-height:13px;color:#000;letter-spacing:-0.9px;">PEQ</div>
<div style="left:591px;top:446px;width:13px;height:13px;background:linear-gradient(135deg,#d8d8d8,#fafafa);border:1px solid #8e8f8f;box-sizing:border-box;box-shadow:inset 0 0 0 1px #f4f4f4, inset 0 0 0 2px #c4c4c8;"></div>
<div style="left:316px;top:469px;width:65px;height:22px;background:#2e2e24;border:1px solid #a9abb5;box-sizing:border-box;"></div>
<div style="left:364px;top:470px;width:16px;height:20px;background:#fff;"></div>
<div style="left:365px;top:471.0px;width:14px;height:9.0px;border:1px solid #b9b9c0;box-sizing:border-box;background:linear-gradient(#fdfdfd,#f1f1f4);"></div>
<svg style="left:369px;top:474px" width="5" height="3" viewBox="0 0 5 3"><path d="M0 3L2.5 0L5 3Z" fill="#4a60c8"/></svg>
<div style="left:365px;top:480.0px;width:14px;height:9.0px;border:1px solid #b9b9c0;box-sizing:border-box;background:linear-gradient(#fdfdfd,#f1f1f4);"></div>
<svg style="left:369px;top:483px" width="5" height="3" viewBox="0 0 5 3"><path d="M0 0H5L2.5 3Z" fill="#4a60c8"/></svg>
<div class="t" style="left:317px;top:473px;font-size:13.33px;line-height:13.33px;color:#f5deb3;width:47px;text-align:center;">220</div>
<div style="left:382px;top:469px;width:65px;height:22px;background:#2e2e24;border:1px solid #a9abb5;box-sizing:border-box;"></div>
<div style="left:430px;top:470px;width:16px;height:20px;background:#fff;"></div>
<div style="left:431px;top:471.0px;width:14px;height:9.0px;border:1px solid #b9b9c0;box-sizing:border-box;background:linear-gradient(#fdfdfd,#f1f1f4);"></div>
<svg style="left:435px;top:474px" width="5" height="3" viewBox="0 0 5 3"><path d="M0 3L2.5 0L5 3Z" fill="#4a60c8"/></svg>
<div style="left:431px;top:480.0px;width:14px;height:9.0px;border:1px solid #b9b9c0;box-sizing:border-box;background:linear-gradient(#fdfdfd,#f1f1f4);"></div>
<svg style="left:435px;top:483px" width="5" height="3" viewBox="0 0 5 3"><path d="M0 0H5L2.5 3Z" fill="#4a60c8"/></svg>
<div class="t" style="left:383px;top:473px;font-size:13.33px;line-height:13.33px;color:#f5deb3;width:47px;text-align:center;">2,000</div>
<div style="left:449px;top:469px;width:51px;height:22px;background:#2e2e24;border:1px solid #a9abb5;box-sizing:border-box;"></div>
<div style="left:483px;top:470px;width:16px;height:20px;background:#fff;"></div>
<div style="left:484px;top:471.0px;width:14px;height:9.0px;border:1px solid #b9b9c0;box-sizing:border-box;background:linear-gradient(#fdfdfd,#f1f1f4);"></div>
<svg style="left:488px;top:474px" width="5" height="3" viewBox="0 0 5 3"><path d="M0 3L2.5 0L5 3Z" fill="#4a60c8"/></svg>
<div style="left:484px;top:480.0px;width:14px;height:9.0px;border:1px solid #b9b9c0;box-sizing:border-box;background:linear-gradient(#fdfdfd,#f1f1f4);"></div>
<svg style="left:488px;top:483px" width="5" height="3" viewBox="0 0 5 3"><path d="M0 0H5L2.5 3Z" fill="#4a60c8"/></svg>
<div class="t" style="left:450px;top:473px;font-size:13.33px;line-height:13.33px;color:#f5deb3;width:33px;text-align:center;">8,0</div>
<div style="left:503px;top:468px;width:85px;height:23px;background:linear-gradient(#f3f3f3 0%,#ebebeb 48%,#dddddd 52%,#cfcfcf 100%);border:1px solid #707070;border-radius:3px;box-sizing:border-box;box-shadow:inset 0 0 0 1px rgba(255,255,255,.75);"></div>
<svg style="left:576.0px;top:478.0px" width="7" height="4" viewBox="0 0 7 4"><path d="M0 0H7L3.5 4Z" fill="#000"/></svg>
<div class="t" style="left:507px;top:474px;font-size:13px;line-height:13px;color:#000;letter-spacing:-0.9px;">PEQ</div>
<div style="left:591px;top:473px;width:13px;height:13px;background:linear-gradient(135deg,#d8d8d8,#fafafa);border:1px solid #8e8f8f;box-sizing:border-box;box-shadow:inset 0 0 0 1px #f4f4f4, inset 0 0 0 2px #c4c4c8;"></div>
<div class="t" style="left:618px;top:291px;font-size:16px;line-height:16px;color:#109010;">High</div>
<div class="t" style="left:695px;top:294px;font-size:13.33px;line-height:13.33px;color:#000;">Freq</div>
<div class="t" style="left:784px;top:294px;font-size:13.33px;line-height:13.33px;color:#000;">Type</div>
<div style="left:674px;top:314px;width:75px;height:22px;background:#2e2e24;border:1px solid #a9abb5;box-sizing:border-box;"></div>
<div style="left:732px;top:315px;width:16px;height:20px;background:#fff;"></div>
<div style="left:733px;top:316.0px;width:14px;height:9.0px;border:1px solid #b9b9c0;box-sizing:border-box;background:linear-gradient(#fdfdfd,#f1f1f4);"></div>
<svg style="left:737px;top:319px" width="5" height="3" viewBox="0 0 5 3"><path d="M0 3L2.5 0L5 3Z" fill="#4a60c8"/></svg>
<div style="left:733px;top:325.0px;width:14px;height:9.0px;border:1px solid #b9b9c0;box-sizing:border-box;background:linear-gradient(#fdfdfd,#f1f1f4);"></div>
<svg style="left:737px;top:328px" width="5" height="3" viewBox="0 0 5 3"><path d="M0 0H5L2.5 3Z" fill="#4a60c8"/></svg>
<div class="t" style="left:675px;top:318px;font-size:13.33px;line-height:13.33px;color:#f5deb3;width:57px;text-align:center;">3000</div>
<div style="left:767px;top:313px;width:117px;height:24px;background:linear-gradient(#f3f3f3 0%,#ebebeb 48%,#dddddd 52%,#cfcfcf 100%);border:1px solid #707070;border-radius:3px;box-sizing:border-box;box-shadow:inset 0 0 0 1px rgba(255,255,255,.75);"></div>
<svg style="left:872.0px;top:323.5px" width="7" height="4" viewBox="0 0 7 4"><path d="M0 0H7L3.5 4Z" fill="#000"/></svg>
<div class="t" style="left:771px;top:319px;font-size:13px;line-height:13px;color:#000;letter-spacing:-0.1px;">Link-Ril 24</div>
<div class="t" style="left:676px;top:375px;font-size:13.33px;line-height:13.33px;color:#000;">Gain</div>
<div class="t" style="left:776px;top:375px;font-size:13.33px;line-height:13.33px;color:#000;">Inv</div>
<div class="t" style="left:809px;top:375px;font-size:13.33px;line-height:13.33px;color:#000;">Délai</div>
<div style="left:675px;top:392px;width:75px;height:22px;background:#2e2e24;border:1px solid #a9abb5;box-sizing:border-box;"></div>
<div style="left:733px;top:393px;width:16px;height:20px;background:#fff;"></div>
<div style="left:734px;top:394.0px;width:14px;height:9.0px;border:1px solid #b9b9c0;box-sizing:border-box;background:linear-gradient(#fdfdfd,#f1f1f4);"></div>
<svg style="left:738px;top:397px" width="5" height="3" viewBox="0 0 5 3"><path d="M0 3L2.5 0L5 3Z" fill="#4a60c8"/></svg>
<div style="left:734px;top:403.0px;width:14px;height:9.0px;border:1px solid #b9b9c0;box-sizing:border-box;background:linear-gradient(#fdfdfd,#f1f1f4);"></div>
<svg style="left:738px;top:406px" width="5" height="3" viewBox="0 0 5 3"><path d="M0 0H5L2.5 3Z" fill="#4a60c8"/></svg>
<div class="t" style="left:676px;top:396px;font-size:13.33px;line-height:13.33px;color:#f5deb3;width:57px;text-align:center;">2,00</div>
<div style="left:776px;top:396px;width:13px;height:13px;background:linear-gradient(135deg,#d8d8d8,#fafafa);border:1px solid #8e8f8f;box-sizing:border-box;box-shadow:inset 0 0 0 1px #f4f4f4, inset 0 0 0 2px #c4c4c8;"></div>
<div style="left:810px;top:392px;width:49px;height:22px;background:#2e2e24;border:1px solid #a9abb5;box-sizing:border-box;"></div>
<div style="left:842px;top:393px;width:16px;height:20px;background:#fff;"></div>
<div style="left:843px;top:394.0px;width:14px;height:9.0px;border:1px solid #b9b9c0;box-sizing:border-box;background:linear-gradient(#fdfdfd,#f1f1f4);"></div>
<svg style="left:847px;top:397px" width="5" height="3" viewBox="0 0 5 3"><path d="M0 3L2.5 0L5 3Z" fill="#4a60c8"/></svg>
<div style="left:843px;top:403.0px;width:14px;height:9.0px;border:1px solid #b9b9c0;box-sizing:border-box;background:linear-gradient(#fdfdfd,#f1f1f4);"></div>
<svg style="left:847px;top:406px" width="5" height="3" viewBox="0 0 5 3"><path d="M0 0H5L2.5 3Z" fill="#4a60c8"/></svg>
<div class="t" style="left:811px;top:396px;font-size:13.33px;line-height:13.33px;color:#f5deb3;width:31px;text-align:center;">0</div>
<div class="t" style="left:861px;top:398px;font-size:13.33px;line-height:13.33px;color:#000;">ms</div>
<div class="t" style="left:618px;top:427px;font-size:13.33px;line-height:13.33px;color:#000;">Frequence</div>
<div class="t" style="left:705px;top:427px;font-size:13.33px;line-height:13.33px;color:#000;">Q</div>
<div class="t" style="left:752px;top:427px;font-size:13.33px;line-height:13.33px;color:#000;">Boost</div>
<div class="t" style="left:823px;top:427px;font-size:13.33px;line-height:13.33px;color:#000;">Type</div>
<div style="left:618px;top:441px;width:64px;height:22px;background:#2e2e24;border:1px solid #a9abb5;box-sizing:border-box;"></div>
<div style="left:665px;top:442px;width:16px;height:20px;background:#fff;"></div>
<div style="left:666px;top:443.0px;width:14px;height:9.0px;border:1px solid #b9b9c0;box-sizing:border-box;background:linear-gradient(#fdfdfd,#f1f1f4);"></div>
<svg style="left:670px;top:446px" width="5" height="3" viewBox="0 0 5 3"><path d="M0 3L2.5 0L5 3Z" fill="#4a60c8"/></svg>
<div style="left:666px;top:452.0px;width:14px;height:9.0px;border:1px solid #b9b9c0;box-sizing:border-box;background:linear-gradient(#fdfdfd,#f1f1f4);"></div>
<svg style="left:670px;top:455px" width="5" height="3" viewBox="0 0 5 3"><path d="M0 0H5L2.5 3Z" fill="#4a60c8"/></svg>
<div class="t" style="left:619px;top:445px;font-size:13.33px;line-height:13.33px;color:#f5deb3;width:46px;text-align:center;">13000</div>
<div style="left:685px;top:441px;width:64px;height:22px;background:#2e2e24;border:1px solid #a9abb5;box-sizing:border-box;"></div>
<div style="left:732px;top:442px;width:16px;height:20px;background:#fff;"></div>
<div style="left:733px;top:443.0px;width:14px;height:9.0px;border:1px solid #b9b9c0;box-sizing:border-box;background:linear-gradient(#fdfdfd,#f1f1f4);"></div>
<svg style="left:737px;top:446px" width="5" height="3" viewBox="0 0 5 3"><path d="M0 3L2.5 0L5 3Z" fill="#4a60c8"/></svg>
<div style="left:733px;top:452.0px;width:14px;height:9.0px;border:1px solid #b9b9c0;box-sizing:border-box;background:linear-gradient(#fdfdfd,#f1f1f4);"></div>
<svg style="left:737px;top:455px" width="5" height="3" viewBox="0 0 5 3"><path d="M0 0H5L2.5 3Z" fill="#4a60c8"/></svg>
<div class="t" style="left:686px;top:445px;font-size:13.33px;line-height:13.33px;color:#f5deb3;width:46px;text-align:center;">5,000</div>
<div style="left:753px;top:441px;width:51px;height:22px;background:#2e2e24;border:1px solid #a9abb5;box-sizing:border-box;"></div>
<div style="left:787px;top:442px;width:16px;height:20px;background:#fff;"></div>
<div style="left:788px;top:443.0px;width:14px;height:9.0px;border:1px solid #b9b9c0;box-sizing:border-box;background:linear-gradient(#fdfdfd,#f1f1f4);"></div>
<svg style="left:792px;top:446px" width="5" height="3" viewBox="0 0 5 3"><path d="M0 3L2.5 0L5 3Z" fill="#4a60c8"/></svg>
<div style="left:788px;top:452.0px;width:14px;height:9.0px;border:1px solid #b9b9c0;box-sizing:border-box;background:linear-gradient(#fdfdfd,#f1f1f4);"></div>
<svg style="left:792px;top:455px" width="5" height="3" viewBox="0 0 5 3"><path d="M0 0H5L2.5 3Z" fill="#4a60c8"/></svg>
<div class="t" style="left:754px;top:445px;font-size:13.33px;line-height:13.33px;color:#f5deb3;width:33px;text-align:center;">-3,0</div>
<div style="left:807px;top:440px;width:84px;height:23px;background:linear-gradient(#f3f3f3 0%,#ebebeb 48%,#dddddd 52%,#cfcfcf 100%);border:1px solid #707070;border-radius:3px;box-sizing:border-box;box-shadow:inset 0 0 0 1px rgba(255,255,255,.75);"></div>
<svg style="left:879.0px;top:450.0px" width="7" height="4" viewBox="0 0 7 4"><path d="M0 0H7L3.5 4Z" fill="#000"/></svg>
<div class="t" style="left:811px;top:446px;font-size:13px;line-height:13px;color:#000;letter-spacing:-0.9px;">PEQ</div>
<div style="left:895px;top:445px;width:13px;height:13px;background:linear-gradient(135deg,#d8d8d8,#fafafa);border:1px solid #8e8f8f;box-sizing:border-box;box-shadow:inset 0 0 0 1px #f4f4f4, inset 0 0 0 2px #c4c4c8;"></div>
<div style="left:618px;top:470px;width:64px;height:22px;background:#2e2e24;border:1px solid #a9abb5;box-sizing:border-box;"></div>
<div style="left:665px;top:471px;width:16px;height:20px;background:#fff;"></div>
<div style="left:666px;top:472.0px;width:14px;height:9.0px;border:1px solid #b9b9c0;box-sizing:border-box;background:linear-gradient(#fdfdfd,#f1f1f4);"></div>
<svg style="left:670px;top:475px" width="5" height="3" viewBox="0 0 5 3"><path d="M0 3L2.5 0L5 3Z" fill="#b0b0b0"/></svg>
<div style="left:666px;top:481.0px;width:14px;height:9.0px;border:1px solid #b9b9c0;box-sizing:border-box;background:linear-gradient(#fdfdfd,#f1f1f4);"></div>
<svg style="left:670px;top:484px" width="5" height="3" viewBox="0 0 5 3"><path d="M0 0H5L2.5 3Z" fill="#b0b0b0"/></svg>
<div class="t" style="left:619px;top:474px;font-size:13.33px;line-height:13.33px;color:#8a8a80;width:46px;text-align:center;">1000</div>
<div style="left:685px;top:470px;width:64px;height:22px;background:#2e2e24;border:1px solid #a9abb5;box-sizing:border-box;"></div>
<div style="left:732px;top:471px;width:16px;height:20px;background:#fff;"></div>
<div style="left:733px;top:472.0px;width:14px;height:9.0px;border:1px solid #b9b9c0;box-sizing:border-box;background:linear-gradient(#fdfdfd,#f1f1f4);"></div>
<svg style="left:737px;top:475px" width="5" height="3" viewBox="0 0 5 3"><path d="M0 3L2.5 0L5 3Z" fill="#b0b0b0"/></svg>
<div style="left:733px;top:481.0px;width:14px;height:9.0px;border:1px solid #b9b9c0;box-sizing:border-box;background:linear-gradient(#fdfdfd,#f1f1f4);"></div>
<svg style="left:737px;top:484px" width="5" height="3" viewBox="0 0 5 3"><path d="M0 0H5L2.5 3Z" fill="#b0b0b0"/></svg>
<div class="t" style="left:686px;top:474px;font-size:13.33px;line-height:13.33px;color:#8a8a80;width:46px;text-align:center;">5,000</div>
<div style="left:753px;top:470px;width:51px;height:22px;background:#2e2e24;border:1px solid #a9abb5;box-sizing:border-box;"></div>
<div style="left:787px;top:471px;width:16px;height:20px;background:#fff;"></div>
<div style="left:788px;top:472.0px;width:14px;height:9.0px;border:1px solid #b9b9c0;box-sizing:border-box;background:linear-gradient(#fdfdfd,#f1f1f4);"></div>
<svg style="left:792px;top:475px" width="5" height="3" viewBox="0 0 5 3"><path d="M0 3L2.5 0L5 3Z" fill="#b0b0b0"/></svg>
<div style="left:788px;top:481.0px;width:14px;height:9.0px;border:1px solid #b9b9c0;box-sizing:border-box;background:linear-gradient(#fdfdfd,#f1f1f4);"></div>
<svg style="left:792px;top:484px" width="5" height="3" viewBox="0 0 5 3"><path d="M0 0H5L2.5 3Z" fill="#b0b0b0"/></svg>
<div class="t" style="left:754px;top:474px;font-size:13.33px;line-height:13.33px;color:#8a8a80;width:33px;text-align:center;">5,0</div>
<div style="left:807px;top:469px;width:84px;height:23px;background:#f4f4f4;border:1px solid #adb2b5;border-radius:3px;box-sizing:border-box;box-shadow:inset 0 0 0 1px rgba(255,255,255,.75);"></div>
<svg style="left:879.0px;top:479.0px" width="7" height="4" viewBox="0 0 7 4"><path d="M0 0H7L3.5 4Z" fill="#a0a0a0"/></svg>
<div class="t" style="left:811px;top:475px;font-size:13px;line-height:13px;color:#838383;letter-spacing:-0.9px;">PEQ</div>
<div style="left:895px;top:474px;width:13px;height:13px;background:linear-gradient(135deg,#d8d8d8,#fafafa);border:1px solid #8e8f8f;box-sizing:border-box;box-shadow:inset 0 0 0 1px #f4f4f4, inset 0 0 0 2px #c4c4c8;"></div>
<svg style="left:897px;top:476px" width="9" height="9" viewBox="0 0 9 9"><path d="M0.9 4.9L2.2 3.9L3.7 6.1L7 0.6L8.5 1.5L3.9 8.7Z" fill="#3c509f"/></svg>
<div style="left:19px;top:561px;width:100px;height:30px;background:#000;"></div>
<div style="left:20px;top:561px;width:98px;height:29px;background:#cad788;"></div>
<div class="t" style="left:20px;top:569px;font-size:13.8px;line-height:13.8px;color:#000;width:98px;text-align:center;">Canal L</div>
<div style="left:125px;top:561px;width:100px;height:30px;border:1px solid #e8d890;box-sizing:border-box;"></div>
<div class="t" style="left:149px;top:569px;font-size:13.8px;line-height:13.8px;color:#f0e0a0;">Canal R</div>
<div style="left:751px;top:566px;width:151px;height:26px;background:#f0f0f0;border-radius:3px;box-shadow:inset 0 0 0 1px #fafafa;"></div>
<div class="t" style="left:751px;top:572px;font-size:14.67px;line-height:14.67px;color:#000;width:151px;text-align:center;">Transfert To DSP</div>
<div style="left:0px;top:664px;width:927px;height:1px;background:#a9afb4;"></div>
<div style="left:0px;top:665px;width:927px;height:7px;background:linear-gradient(#e6eef9,#dde8f5 50%,#e8f0fa);"></div>
<div style="left:0px;top:672px;width:927px;height:9px;background:linear-gradient(#7a7a7a 0,#7a7a7a 1px,#b4b4b4 1px,#d6d6d6 4px,#f2f2f2 9px);"></div>
<div class="t" style="left:5.5px;top:615px;font-size:14.67px;line-height:14.67px;color:#ffff00;font-weight:bold;letter-spacing:0.15px;">Port COM :</div>
<div style="left:100px;top:612px;width:80px;height:24px;background:#fff;border-radius:2px;"></div>
<svg style="left:160px;top:622px" width="7" height="4" viewBox="0 0 7 4"><path d="M0 0H7L3.5 4Z" fill="#000"/></svg>
<div style="left:100px;top:641px;width:66px;height:18px;background:#7b7b7b;"></div>
<div class="t" style="left:103.5px;top:644px;font-size:13.33px;line-height:13.33px;color:#e8e090;">Port COM</div>
<div class="t" style="left:640px;top:627px;font-size:13.33px;line-height:13.33px;color:#d8c890;width:61px;text-align:right;">Level</div>
<div style="left:600px;top:649px;width:157px;height:9px;background:linear-gradient(#e8e8e8,#c4c4c4 50%,#d8d8d8);border-radius:2px;"></div>
<div style="left:749px;top:620px;width:1px;height:1px;background:#ddd;"></div>
<div style="left:799px;top:609px;width:90px;height:49px;background:#ff0000;border:2px solid #f4f4f4;box-sizing:border-box;border-radius:2px;"></div>
<div class="t" style="left:799px;top:627px;font-size:13.33px;line-height:13.33px;color:#200000;width:90px;text-align:center;">MUTE</div>
<div id="win" style="left:166px;top:496px;width:529px;height:200px;">
<div style="left:0px;top:0px;width:529px;height:200px;background:linear-gradient(180deg,#d4e4d4 0px,#d9e7da 24px,#dbe8dc 62px,#b9c9d2 66px,#7f96b2 70px,#8ba1bb 98px,#c9d6e4 102px,#d4deea 105px,#8299b6 109px,#92a8c2 140px,#7e95b2 166px,#cfdae8 171px,#dfe6f0 200px);border:1px solid #3c4038;box-sizing:border-box;box-shadow:inset 0 0 0 1px #f4f8f4;"></div>
<div style="left:2px;top:2px;width:525px;height:22px;background:linear-gradient(100deg,#dbe8db 0%,#c4d7c5 18%,#d0e0d0 26%,#b9cfbb 33%,#abc5ad 50%,#b4ccb6 68%,#c6dac7 80%,#bcd3be 88%,#d0e1d0 100%);"></div>
<div class="t" style="left:8.5px;top:9px;font-size:9.7px;line-height:9.7px;color:#000;">Courbes</div>
<div style="left:507px;top:5px;width:16px;height:17px;border:1px solid #4e5c52;border-radius:2.5px;box-sizing:border-box;background:linear-gradient(#f2b09c 0%,#e98c72 47%,#c9401f 50%,#e06a48 100%);box-shadow:inset 0 0 0 1px rgba(255,255,255,.5);"></div>
<svg style="left:510px;top:9px" width="9" height="9" viewBox="0 0 9 9"><path d="M1.9 2L7.1 7M7.1 2L1.9 7" stroke="#46506a" stroke-width="3" stroke-linecap="butt"/><path d="M2.2 2.3L6.8 6.7M6.8 2.3L2.2 6.7" stroke="#fff" stroke-width="1.5" stroke-linecap="butt"/></svg>
<div style="left:6px;top:24px;width:517px;height:180px;background:#696969;border:1px solid #000;box-sizing:border-box;outline:1px solid #f8fbf8;"></div>
<div class="t" style="left:-16px;top:45px;font-size:14.67px;line-height:14.67px;color:#000;font-weight:bold;width:86px;text-align:right;">Low :</div>
<div style="left:102px;top:47px;width:11px;height:11px;background:#c0c0c0;border:1px solid #e06666;box-sizing:border-box;"></div>
<div class="t" style="left:119px;top:47px;font-size:13.7px;line-height:13.7px;color:#e06666;">Filtres</div>
<div style="left:209px;top:47px;width:11px;height:11px;background:#c0c0c0;border:1px solid #b00000;box-sizing:border-box;"></div>
<div class="t" style="left:226px;top:47px;font-size:13.7px;line-height:13.7px;color:#b00000;">Mesure</div>
<div style="left:324px;top:47px;width:11px;height:11px;background:#c0c0c0;border:1px solid #ff4500;box-sizing:border-box;"></div>
<div class="t" style="left:341px;top:47px;font-size:13.7px;line-height:13.7px;color:#ff4500;">Simu</div>
<div class="t" style="left:-16px;top:71px;font-size:14.67px;line-height:14.67px;color:#000;font-weight:bold;width:86px;text-align:right;">Mid :</div>
<div style="left:102px;top:73px;width:11px;height:11px;background:#c0c0c0;border:1px solid #0000ff;box-sizing:border-box;"></div>
<div class="t" style="left:119px;top:73px;font-size:13.7px;line-height:13.7px;color:#0000ff;">Filtres</div>
<div style="left:209px;top:73px;width:11px;height:11px;background:#c8c8c8;border:1px solid #00008b;box-sizing:border-box;"></div>
<svg style="left:209px;top:73px" width="11" height="11" viewBox="0 0 11 11"><path d="M2 4.8L4.4 7.2L8.8 2.8V5.8L4.4 10.2L2 7.8Z" fill="#00008b"/></svg>
<div class="t" style="left:226px;top:73px;font-size:13.7px;line-height:13.7px;color:#00008b;">Mesure</div>
<div style="left:324px;top:73px;width:11px;height:11px;background:#bcbcbc;border:1px solid #00bfff;box-sizing:border-box;"></div>
<svg style="left:324px;top:73px" width="11" height="11" viewBox="0 0 11 11"><path d="M2 4.8L4.4 7.2L8.8 2.8V5.8L4.4 10.2L2 7.8Z" fill="#00bfff"/></svg>
<div class="t" style="left:341px;top:73px;font-size:13.7px;line-height:13.7px;color:#00bfff;">Simu</div>
<div class="t" style="left:-16px;top:98px;font-size:14.67px;line-height:14.67px;color:#000;font-weight:bold;width:86px;text-align:right;">High :</div>
<div style="left:102px;top:100px;width:11px;height:11px;background:#c0c0c0;border:1px solid #0a8f0a;box-sizing:border-box;"></div>
<div class="t" style="left:119px;top:100px;font-size:13.7px;line-height:13.7px;color:#0a8f0a;">Filtres</div>
<div style="left:209px;top:100px;width:11px;height:11px;background:#c0c0c0;border:1px solid #0a7a0a;box-sizing:border-box;"></div>
<div class="t" style="left:226px;top:100px;font-size:13.7px;line-height:13.7px;color:#0a7a0a;">Mesure</div>
<div style="left:324px;top:100px;width:11px;height:11px;background:#c0c0c0;border:1px solid #7cfc00;box-sizing:border-box;"></div>
<div class="t" style="left:341px;top:100px;font-size:13.7px;line-height:13.7px;color:#7cfc00;">Simu</div>
<div class="t" style="left:-16px;top:125px;font-size:14.67px;line-height:14.67px;color:#000;font-weight:bold;width:86px;text-align:right;">Total :</div>
<div style="left:102px;top:127px;width:11px;height:11px;background:#c0c0c0;border:1px solid #ff1493;box-sizing:border-box;"></div>
<div class="t" style="left:119px;top:127px;font-size:13.7px;line-height:13.7px;color:#ff1493;">Filtres</div>
<div style="left:209px;top:127px;width:11px;height:11px;background:#c0c0c0;border:1px solid #a000a0;box-sizing:border-box;"></div>
<div class="t" style="left:226px;top:127px;font-size:13.7px;line-height:13.7px;color:#a000a0;">Mesure</div>
<div style="left:324px;top:127px;width:11px;height:11px;background:#c0c0c0;border:1px solid #ff00ff;box-sizing:border-box;"></div>
<div class="t" style="left:341px;top:127px;font-size:13.7px;line-height:13.7px;color:#ff00ff;">Simu</div>
<div style="left:109px;top:165px;width:11px;height:11px;background:#bcc2c8;border:1px solid #e8750f;box-sizing:border-box;"></div>
<svg style="left:109px;top:165px" width="11" height="11" viewBox="0 0 11 11"><path d="M2 4.8L4.4 7.2L8.8 2.8V5.8L4.4 10.2L2 7.8Z" fill="#e8750f"/></svg>
<div class="t" style="left:126px;top:165px;font-size:13.7px;line-height:13.7px;color:#e8750f;">Cible</div>
<div style="left:178px;top:165px;width:11px;height:11px;background:#c0c0c0;border:1px solid #b0e0e6;box-sizing:border-box;"></div>
<div class="t" style="left:195px;top:165px;font-size:13.7px;line-height:13.7px;color:#b0e0e6;">Cible</div>
<div style="left:247px;top:165px;width:11px;height:11px;background:#c0c0c0;border:1px solid #3cb371;box-sizing:border-box;"></div>
<div class="t" style="left:264px;top:165px;font-size:13.7px;line-height:13.7px;color:#3cb371;">Cible</div>
<div style="left:316px;top:165px;width:11px;height:11px;background:#c0c0c0;border:1px solid #ff69b4;box-sizing:border-box;"></div>
<div class="t" style="left:333px;top:165px;font-size:13.7px;line-height:13.7px;color:#ff69b4;">Cible</div>
<div style="left:409px;top:163px;width:71px;height:19px;background:linear-gradient(#f3f3f3 0%,#ebebeb 48%,#dddddd 52%,#cfcfcf 100%);border:1px solid #707070;border-radius:3px;box-sizing:border-box;box-shadow:inset 0 0 0 1px rgba(255,255,255,.8);"></div>
<div class="t" style="left:409px;top:167px;font-size:11px;line-height:11px;color:#000;width:71px;text-align:center;">Tout Off</div>
</div>
</div></body></html>
